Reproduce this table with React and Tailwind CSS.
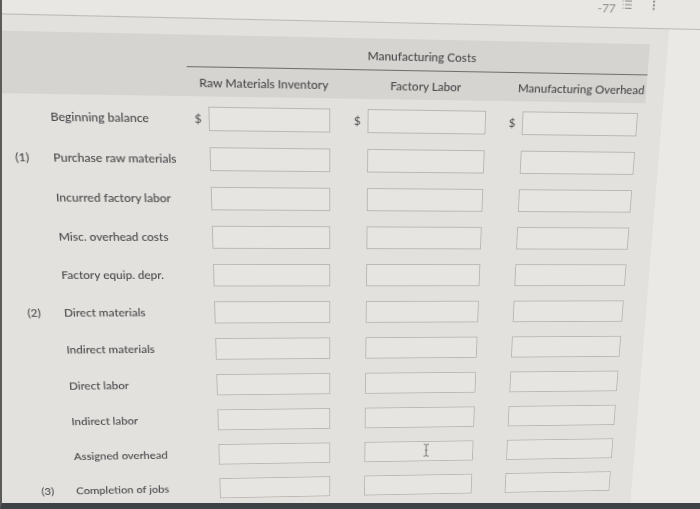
import { useMemo } from 'react';

// corners of the first and last row of inputs: where they sit on the flat page,
// and where they land in the (tilted) photo of the screen
const SRC = [[248, 137], [690, 137], [690, 561], [248, 561]];
const DST = [[206.3, 106.7], [636, 113], [607.3, 490.7], [218, 498.3]];

const rows = [
  { num: '', label: 'Beginning balance', dollar: true },
  { num: '(1)', label: 'Purchase raw materials' },
  { num: '', label: 'Incurred factory labor' },
  { num: '', label: 'Misc. overhead costs' },
  { num: '', label: 'Factory equip. depr.' },
  { num: '(2)', label: 'Direct materials' },
  { num: '', label: 'Indirect materials' },
  { num: '', label: 'Direct labor' },
  { num: '', label: 'Indirect labor' },
  { num: '', label: 'Assigned overhead' },
  { num: '(3)', label: 'Completion of jobs' },
];

function homography(src, dst) {
  const A = [];
  const b = [];
  for (let i = 0; i < 4; i++) {
    const [x, y] = src[i];
    const [X, Y] = dst[i];
    A.push([x, y, 1, 0, 0, 0, -x * X, -y * X]);
    b.push(X);
    A.push([0, 0, 0, x, y, 1, -x * Y, -y * Y]);
    b.push(Y);
  }
  const n = 8;
  for (let c = 0; c < n; c++) {
    let p = c;
    for (let r = c + 1; r < n; r++) if (Math.abs(A[r][c]) > Math.abs(A[p][c])) p = r;
    [A[c], A[p]] = [A[p], A[c]];
    [b[c], b[p]] = [b[p], b[c]];
    for (let r = c + 1; r < n; r++) {
      const f = A[r][c] / A[c][c];
      for (let k = c; k < n; k++) A[r][k] -= f * A[c][k];
      b[r] -= f * b[c];
    }
  }
  const h = new Array(n);
  for (let r = n - 1; r >= 0; r--) {
    let s = b[r];
    for (let k = r + 1; k < n; k++) s -= A[r][k] * h[k];
    h[r] = s / A[r][r];
  }
  return `matrix3d(${h[0]},${h[3]},0,${h[6]},${h[1]},${h[4]},0,${h[7]},0,0,1,0,${h[2]},${h[5]},0,1)`;
}

function Box({ cursor }) {
  return (
    <div className="relative w-[122px] h-[24px] border border-[#bab8b3] bg-[#e7e5e1] shrink-0">
      {cursor && (
        <svg className="absolute left-[64px] top-[2px]" width="8" height="16" viewBox="0 0 8 16">
          <path d="M1 1h2.2l.8.8.8-.8H7M4 1.8v12.4M1 15h2.2l.8-.8.8.8H7M2.5 8h3" fill="none" stroke="#6a6a6a" strokeWidth="1" />
        </svg>
      )}
    </div>
  );
}

function Cell({ width, dollar, cursor }) {
  return (
    <div className={`${width} shrink-0 flex items-center justify-end`}>
      {dollar && <span className="mr-[7px] text-[12px] text-[#555557]">$</span>}
      <Box cursor={cursor} />
    </div>
  );
}

export default function App() {
  const transform = useMemo(() => homography(SRC, DST), []);

  return (
    <div className="w-[700px] h-[509px] flex border-l-2 border-l-[#5b5b5a] border-b-[6px] border-b-[#3c4246] bg-[#e3e1dd] [font-family:Lato,sans-serif]">
      <div className="flex-1 overflow-hidden">
        <div className="w-[810px] h-[600px] origin-top-left flex flex-col bg-[#e3e1dd]" style={{ transform }}>
          {/* top toolbar */}
          <div className="h-[53px] shrink-0 flex items-end pb-[17px] pl-[640px] border-b border-[#bcbbb7] bg-[#e8e7e3]">
            <span className="w-[22px] mb-[-5px] text-[12px] leading-[12px] text-[#8c8c8c]">-77</span>
            <svg className="ml-[3px]" width="10" height="10" viewBox="0 0 10 10">
              <path d="M3 1.5h7M3 5h7M3 8.5h7" stroke="#8a8a8a" strokeWidth="1" />
              <path d="M0.5 1.5h1M0.5 5h1M0.5 8.5h1" stroke="#8a8a8a" strokeWidth="1" />
            </svg>
            <svg className="ml-[21px]" width="4" height="10" viewBox="0 0 4 10">
              <circle cx="2" cy="1.5" r="1" fill="#6f6f6f" />
              <circle cx="2" cy="5" r="1" fill="#6f6f6f" />
              <circle cx="2" cy="8.5" r="1" fill="#6f6f6f" />
            </svg>
          </div>

          <div className="flex flex-1">
            <div className="w-[716px] shrink-0 text-[#48484b] font-medium">
              {/* header band */}
              <div className="mt-[15px] w-[697px] h-[59px] bg-[#d6d4d0]">
                <div className="ml-[228px] h-[31px] pt-[9px] border-b border-[#6f6e6a] text-center text-[12px] leading-[16px]">
                  Manufacturing Costs
                </div>
                <div className="flex pt-[7px] text-[12px] leading-[16px]">
                  <div className="w-[230px] shrink-0" />
                  <div className="w-[140px] shrink-0 pl-[8px] text-center whitespace-nowrap">Raw Materials Inventory</div>
                  <div className="w-[160px] shrink-0 pl-[34px] text-center whitespace-nowrap">Factory Labor</div>
                  <div className="w-[160px] shrink-0 pl-[32px] text-center whitespace-nowrap">Manufacturing Overhead</div>
                </div>
              </div>

              {/* entry rows */}
              <div className="mt-[2px] flex flex-col">
                {rows.map((row, i) => (
                  <div key={i} className="h-[40px] flex items-center text-[12px]">
                    <div className="w-[56px] shrink-0" />
                    <div className="w-[37px] shrink-0">{row.num}</div>
                    <div className="w-[137px] shrink-0 whitespace-nowrap">{row.label}</div>
                    <Cell width="w-[140px]" dollar={row.dollar} />
                    <Cell width="w-[160px]" dollar={row.dollar} cursor={i === 9} />
                    <Cell width="w-[160px]" dollar={row.dollar} />
                  </div>
                ))}
              </div>
            </div>
            <div className="flex-1 bg-[#eae9e6]" />
          </div>
        </div>
      </div>
    </div>
  );
}
